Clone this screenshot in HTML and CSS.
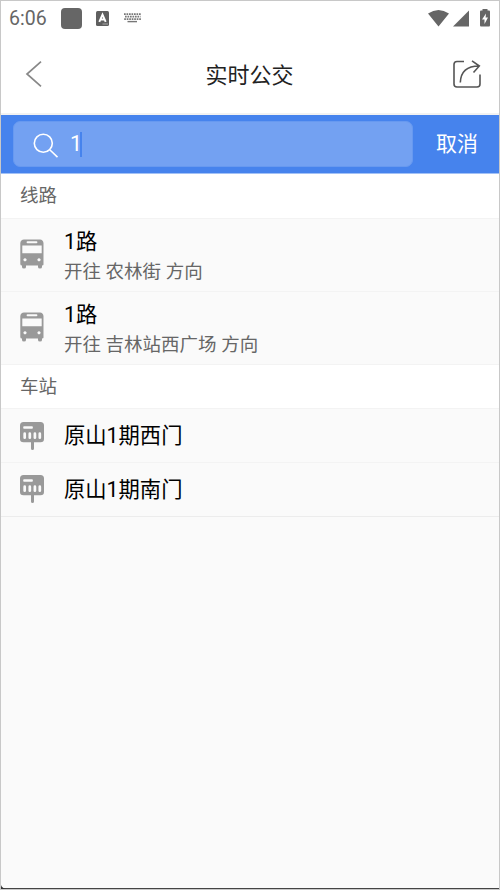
FILE: index.html
```html
<!DOCTYPE html>
<html lang="zh-CN">
<head>
<meta charset="utf-8">
<title>实时公交</title>
<link rel="stylesheet" href="styles.css">
</head>
<body>
<svg class="defs" width="0" height="0" aria-hidden="true">
  <symbol id="bus" viewBox="0 0 24 30">
    <path fill="#999" fill-rule="evenodd" d="M4 0.5H20Q23 0.5 23.5 4V25.5Q23.500 26.500 22 26.500V28Q22 29.500 20 29.500T18 28V26.500H6V28Q6 29.500 4 29.500T2 28V26.500Q.3 26.500 .3 25V4Q.7.5 4 .5ZM7.500 2.300Q6.600 2.300 6.600 3.300T7.500 4.300H16.500Q17.400 4.300 17.400 3.300T16.500 2.300ZM2.300 6.500V14.200H21.700V6.500ZM5 19.200a1.600 1.600 0 1 0 .01 0ZM19 19.200a1.600 1.600 0 1 0 .01 0Z"/>
  </symbol>
  <symbol id="stop" viewBox="0 0 24 28">
    <path fill="#999" fill-rule="evenodd" d="M3.500 0H20.500Q24 0 24 3.500V17Q24 20.300 20.500 20.300H14V26.500Q14 28 12.500 28T11 26.500V20.300H3.500Q0 20.300 0 17V3.500Q0 0 3.500 0ZM4 4.200Q3.200 4.200 3.200 5.500T4 6.800H12Q12.900 6.800 12.900 5.500T12 4.200Z"/>
    <path stroke="#fafafa" stroke-width="2.700" stroke-linecap="round" d="M4.700 11.700V15.700M9.800 11.700V15.700M14.900 11.700V15.700M19.800 11.700V15.700"/>
  </symbol>
</svg>
<div class="screen">
  <div class="status">
    <span class="clock">6:06</span>
    <span class="app"></span>
    <svg class="input-method" width="13" height="15" viewBox="0 0 13 15"><rect width="13" height="15" rx="1.500" fill="#5f5f5f"/><path d="M3.300 10.800 6.500 3.500 9.700 10.800M4.500 8.500H8.500" fill="none" stroke="#fff" stroke-width="1.900"/><path d="M6.500 13H12" stroke="#aaa"/></svg>
    <svg class="keyboard" width="17" height="10" viewBox="0 0 17 10"><g stroke="#777" stroke-width="1.700"><path stroke-dasharray="1.700 .8" d="M0 1.200H17M1 3.700H16.500"/><path stroke-dasharray="1.700 .8" d="M.2 6.200H17"/><path d="M3.500 8.600H13" stroke-width="1.400"/></g></svg>
    <svg class="system" width="64" height="20" viewBox="0 0 64 20"><g fill="#666"><path d="M0 4.500Q10.500-2.500 21 4.500L10.500 17.500ZM25 17.500 41 1.500V17.500ZM54.500 0H59.500V1.500H61Q62 1.500 62 2.700V16.300Q62 17.500 61 17.500H53Q52 17.500 52 16.300V2.700Q52 1.500 53 1.500H54.500Z"/></g><path fill="#fff" d="M58 4.500 54 10.500H56.500V15L60 8.500H57.600Z"/></svg>
  </div>
  <header class="header">
    <svg width="17" height="26" viewBox="0 0 17 26"><path d="M16 .7 2 13 16 25.300" fill="none" stroke="#888" stroke-width="1.700"/></svg>
    <h1>实时公交</h1>
    <svg width="28" height="28" viewBox="0 0 28 28"><g fill="none" stroke="#555" stroke-width="1.600"><path d="M11 1.500H4Q1 1.500 1 4.500V24Q1 27 4 27H24Q27 27 27 24V14.500"/><path d="M7.300 22.500Q8 6 26 6M19 .9 26.300 6 20.500 12.500"/></g></svg>
  </header>
  <div class="search">
    <div class="field">
      <svg class="magnifier" width="26" height="26" viewBox="0 0 26 26"><g fill="none" stroke="#fff" stroke-width="1.600"><circle cx="10.300" cy="10.300" r="9"/><path d="M17 17 24.500 24.200"/></g></svg>
      <span class="query">1</span><span class="caret"></span>
    </div>
    <span class="cancel">取消</span>
  </div>
  <h2 class="section lines">线路</h2>
  <div class="row route"><svg class="bus"><use href="#bus"/></svg><div><p class="name">1路</p><p class="direction">开往 农林街 方向</p></div></div>
  <div class="row route"><svg class="bus"><use href="#bus"/></svg><div><p class="name">1路</p><p class="direction">开往 吉林站西广场 方向</p></div></div>
  <h2 class="section stations">车站</h2>
  <div class="row station"><svg class="stop"><use href="#stop"/></svg><p class="name">原山1期西门</p></div>
  <div class="row station last"><svg class="stop"><use href="#stop"/></svg><p class="name">原山1期南门</p></div>
  <svg class="corner" width="5" height="4" viewBox="0 0 5 4"><path d="M0 0Q1 3 5 4H0Z" fill="#333"/></svg>
</div>
</body>
</html>
```
FILE: styles.css
```css
* { box-sizing: border-box; }
body { margin: 0; font-family: Roboto, "Noto Sans CJK SC", sans-serif; }
h1, h2, p { margin: 0; font-weight: 400; }
svg { display: block; flex: none; }
.defs { position: absolute; }
.screen {
  display: flex;
  flex-direction: column;
  width: 500px;
  height: 890px;
  border: 1px solid #c8c8c8;
  background: linear-gradient(#444, #444) bottom / 100% 1px no-repeat padding-box, #fafafa;
  overflow: hidden;
}
.status {
  display: flex;
  align-items: center;
  height: 34px;
  padding-left: 8px;
  background: #fff;
}
.clock { width: 52px; padding-top: 2px; font-size: 19.500px; line-height: 34px; color: #666; }
.app { width: 21px; height: 21px; border-radius: 4px; background: #666; }
.input-method { margin-left: 14px; }
.keyboard { margin-left: 15px; }
.system { margin: 1px 7px 0 auto; }
.header {
  display: flex;
  align-items: center;
  justify-content: space-between;
  height: 80px;
  padding: 0 18px 0 24px;
  background: #fff;
  border-bottom: 2px solid #f2f2f2;
}
.header h1 { padding-top: 4px; font-size: 22px; line-height: 32px; color: #222; margin-left: 4px; }
.search {
  display: flex;
  align-items: center;
  height: 59px;
  padding-left: 12px;
  background: #4683ed;
  border-bottom: 1px solid #a2c1f6;
  color: #fff;
}
.field {
  display: flex;
  align-items: center;
  width: 400px;
  height: 46px;
  padding-left: 19px;
  border: 1px solid #6799f0;
  border-radius: 7px;
  background: #73a1f2;
}
.magnifier { margin-top: 3px; }
.query { margin-left: 11px; font-size: 21.500px; line-height: 30px; }
.caret { width: 2px; height: 25px; margin-left: -2px; background: #4683ed; }
.cancel { margin-left: 23px; font-size: 21px; line-height: 30px; }
.section {
  height: 44px;
  padding-left: 19px;
  font-size: 18.500px;
  line-height: 45px;
  color: #666;
  background: #fff;
}
.stations { border-top: 1px solid #f3f3f3; }
.row { display: flex; border-top: 1px solid #f3f3f3; padding-left: 19px; }
.route { height: 73px; }
.bus { width: 24px; height: 30px; margin: 20px 20px 0 0; }
.route .name { height: 33px; line-height: 46px; }
.name { font-size: 21.300px; color: #000; }
.direction { font-size: 18.500px; line-height: 40px; color: #666; }
.station { height: 54px; }
.last { height: 55px; border-bottom: 1px solid #ececec; }
.stop { width: 24px; height: 28px; margin: 13px 20px 0 0; }
.last .stop { margin-top: 12px; }
.station .name { line-height: 53px; }
.corner { margin-top: auto; }
```
